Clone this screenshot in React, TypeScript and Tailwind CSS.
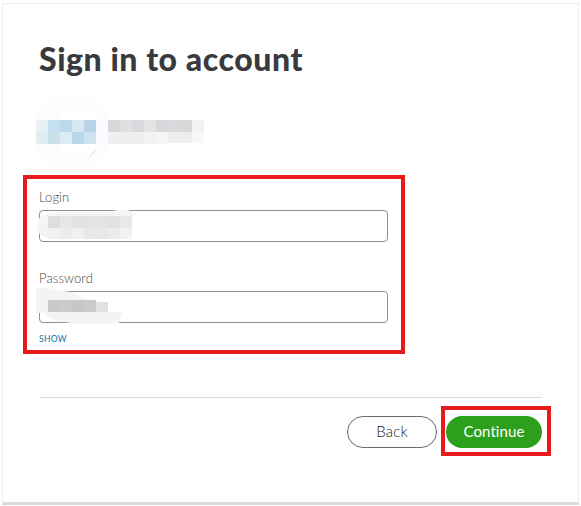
import React, { useState } from 'react'

interface Cell {
  x: number
  y: number
  w: number
  h: number
  color: string
}

const makeRow = (x: number, y: number, h: number, colors: string[]): Cell[] =>
  colors.map((color, i) => ({ x: x + i * 12, y, w: 12, h, color }))

const accountCells: Cell[] = [
  ...makeRow(0, 24, 12, ['#e8f1f6', '#c6dfef', '#bcdaec', '#d8e8f3', '#b8d5e8', '#fafbfe', '#d8d8d8', '#dfe1e0', '#d8d9dc', '#e5e3e1', '#d7d8db', '#d8d9dc', '#d8d8d9', '#f1f2f4']),
  ...makeRow(0, 36, 12, ['#e0edf2', '#c8e1eb', '#dcebf4', '#bad8eb', '#cfe2ef', '#fafbfe', '#efefef', '#eef0ef', '#efefef', '#f2f2f2', '#f5f5f5']),
  ...makeRow(132, 36, 11, ['#eeeeef', '#ededed', '#f8f8f8']),
]

const loginCells: Cell[] = [
  ...makeRow(12, 6, 12, ['#dedede', '#e7e7e6', '#e2e2e2', '#e3e3e3', '#e4e3e2', '#e2e2e2', '#e8e9e9']),
  ...makeRow(12, 18, 11, ['#f0f1f1', '#ececea', '#f0f0f1', '#e9e9e9', '#e9e8e8', '#ececec', '#f1f3f3']),
]

const passwordCells: Cell[] = [
  ...makeRow(12, 12, 12, ['#c9c9c9', '#cacbca', '#c7c7c8', '#cbcac9']),
  ...makeRow(60, 14, 10, ['#e0e2e1']),
]

function Cells({ cells }: { cells: Cell[] }) {
  return (
    <g shapeRendering="crispEdges">
      {cells.map((c) => (
        <rect key={`${c.x}-${c.y}`} x={c.x} y={c.y} width={c.w} height={c.h} fill={c.color} />
      ))}
    </g>
  )
}

function AccountMask() {
  return (
    <svg className="-ml-[3px] block h-[72px] w-[168px]" viewBox="0 0 168 72">
      <path d="M12 5L24 0H60V12H72V60H60V72H12V60H0V12H12z" fill="#fdfdfe" />
      <path d="M24 12H60V24H24zM24 48H60L53 60H24z" fill="#fff" />
      <Cells cells={accountCells} />
      <path d="M53 61L60 54" stroke="#d5e0e8" strokeWidth="1" />
    </svg>
  )
}

const inputClass =
  'block h-8 w-[349px] rounded-[4px] border border-[#8d9096] bg-white px-3 text-sm outline-none'
const labelClass = 'block h-4 text-[13px] leading-4 font-light tracking-[0.1px] text-[#44454b]'

export default function App() {
  const [login, setLogin] = useState('')
  const [password, setPassword] = useState('')
  const [visible, setVisible] = useState(false)

  return (
    <div className="h-[506px] w-[581px] overflow-hidden bg-white pt-[3px] pl-[2px] font-['Lato',sans-serif]">
      <div className="h-[502px] w-[577px] border border-b-[3px] border-[#ececed] border-b-[#d8dade] pl-9">
        <h1 className="pt-[35px] text-[32px] leading-10 font-black tracking-[0.55px] whitespace-nowrap text-[#393a3d]">
          Sign in to account
        </h1>

        <div className="mt-[17px]">
          <AccountMask />
        </div>

        <div className="mt-[7px] -ml-4 h-[179px] w-[382px] border-4 border-[#e81a1b] pl-3">
          <label htmlFor="login" className={`mt-[10px] ${labelClass}`}>
            Login
          </label>
          <div className="relative mt-[5px]">
            <input id="login" className={inputClass} value={login} onChange={(e) => setLogin(e.target.value)} />
            <svg className="pointer-events-none absolute top-0 -left-[3px] h-8 w-28" viewBox="0 0 112 32">
              <path d="M1 16Q2 5 12 4L22 2H74Q86-2 92 0L102 5H96V29H27Q18 30 9 27Q1 25 1 16z" fill="#f4f4f4" />
              <Cells cells={loginCells} />
            </svg>
          </div>

          <label htmlFor="password" className={`mt-7 ${labelClass}`}>
            Password
          </label>
          <div className="relative mt-[5px]">
            <input
              id="password"
              type={visible ? 'text' : 'password'}
              className={inputClass}
              value={password}
              onChange={(e) => setPassword(e.target.value)}
            />
            <svg className="pointer-events-none absolute -top-[3px] -left-[3px] h-9 w-[88px]" viewBox="0 0 88 36">
              <path d="M0 0H12L34 4Q40 5 43 9L60 13L72 16V24H86L83 35Q50 38 29 34Q13 33 8 25H0z" fill="#f4f4f4" />
              <Cells cells={passwordCells} />
            </svg>
          </div>
          <button
            type="button"
            onClick={() => setVisible(!visible)}
            className="mt-[10px] block text-[8.5px] leading-3 tracking-[0.35px] text-[#0077a5]"
          >
            SHOW
          </button>
        </div>

        <div className="mt-[43px] h-px w-[503px] bg-[#d9dade]" />

        <div className="mt-2 flex w-[512px] items-center justify-end gap-1">
          <button className="mt-0.5 h-8 w-[90px] rounded-full border border-[#6b6c72] pb-px text-[15px] leading-none font-light tracking-[0.2px] text-[#1d1e20]">
            Back
          </button>
          <div className="flex h-[50px] w-[110px] items-center border-4 border-[#e81a1b] pt-0.5 pl-px">
            <button className="h-8 w-24 rounded-full bg-[#2ca01c] pb-px text-[15px] leading-none tracking-[0.1px] text-white">
              Continue
            </button>
          </div>
        </div>
      </div>
    </div>
  )
}
